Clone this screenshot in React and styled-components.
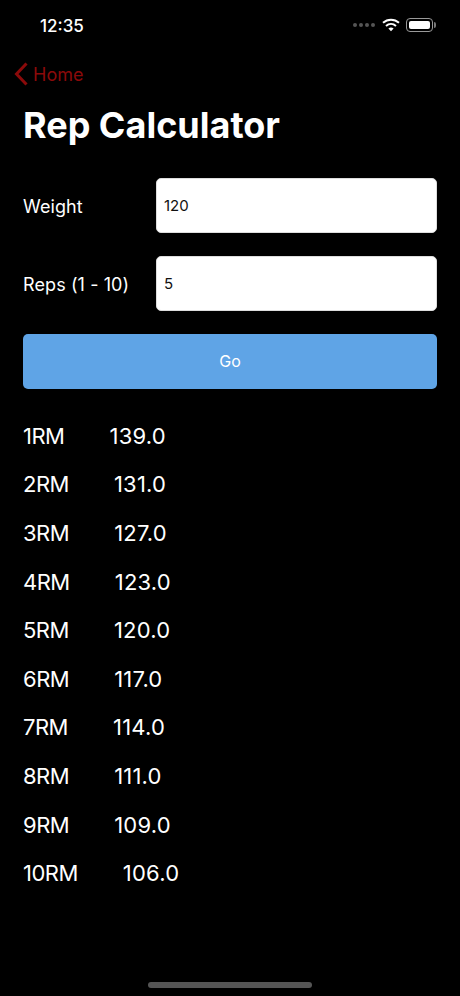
import React from "react";
import styled, { createGlobalStyle } from "styled-components";

const results = [
  { label: "1RM", value: "139.0" },
  { label: "2RM", value: "131.0" },
  { label: "3RM", value: "127.0" },
  { label: "4RM", value: "123.0" },
  { label: "5RM", value: "120.0" },
  { label: "6RM", value: "117.0" },
  { label: "7RM", value: "114.0" },
  { label: "8RM", value: "111.0" },
  { label: "9RM", value: "109.0" },
  { label: "10RM", value: "106.0" },
];

const App = () => {
  return (
    <Screen>
      <GlobalStyle />
      <StatusBar>
        <Time>12:35</Time>
        <StatusIcons>
          <Dots>
            <Dot />
            <Dot />
            <Dot />
            <Dot />
          </Dots>
          <svg width="18" height="14" viewBox="0 0 18 14" fill="none">
            <path d="M1 4.8C5.6 0.6 12.4 0.6 17 4.8" stroke="#fff" strokeWidth="2" />
            <path d="M4 8C6.9 5.4 11.1 5.4 14 8" stroke="#fff" strokeWidth="2" />
            <path d="M9 13.2L6.4 10.5C8 9.2 10 9.2 11.6 10.5Z" fill="#fff" />
          </svg>
          <Battery>
            <BatteryFill />
          </Battery>
        </StatusIcons>
      </StatusBar>
      <BackRow>
        <svg width="15" height="24" viewBox="0 0 15 24" fill="none">
          <path d="M13.5 1.5L3.5 12L13.5 22.5" stroke="#8b0a0a" strokeWidth="3" />
        </svg>
        <BackLabel>Home</BackLabel>
      </BackRow>
      <Title>Rep Calculator</Title>
      <Form>
        <Field>
          <Label>Weight</Label>
          <Input value="120" readOnly />
        </Field>
        <Field>
          <Label>Reps (1 - 10)</Label>
          <Input value="5" readOnly />
        </Field>
        <GoButton>Go</GoButton>
      </Form>
      <Results>
        {results.map((r) => (
          <Row key={r.label}>
            <RowLabel>{r.label}</RowLabel>
            <Value>{r.value}</Value>
          </Row>
        ))}
      </Results>
      <HomeBar />
    </Screen>
  );
};

export default App;

const GlobalStyle = createGlobalStyle`
  body {
    margin: 0;
    background: #000;
    font-family: Inter, "Liberation Sans", sans-serif;
  }
`;

const Screen = styled.div`
  position: relative;
  width: 460px;
  height: 996px;
  background: #000;
  color: #fff;
  overflow: hidden;
`;

const StatusBar = styled.div`
  display: flex;
  justify-content: space-between;
  align-items: center;
  height: 52px;
  padding: 0 24px 0 40px;
`;

const Time = styled.div`
  font-size: 17px;
  font-weight: 500;
`;

const StatusIcons = styled.div`
  display: flex;
  align-items: center;
  gap: 6px;
  margin-top: -2px;
`;

const Dots = styled.div`
  display: flex;
  gap: 2px;
  margin-right: 1px;
`;

const Dot = styled.div`
  width: 4px;
  height: 4px;
  border-radius: 50%;
  background: #555;
`;

const Battery = styled.div`
  position: relative;
  width: 27px;
  height: 14px;
  margin-right: 3px;
  padding: 2px;
  box-sizing: border-box;
  border: 1px solid #999;
  border-radius: 4px;

  &::after {
    content: "";
    position: absolute;
    right: -4px;
    top: 3px;
    width: 2px;
    height: 6px;
    border-radius: 0 2px 2px 0;
    background: #777;
  }
`;

const BatteryFill = styled.div`
  height: 100%;
  background: #fff;
  border-radius: 2px;
`;

const BackRow = styled.div`
  display: flex;
  align-items: center;
  gap: 5px;
  height: 44px;
  padding-left: 13px;
`;

const BackLabel = styled.span`
  font-size: 18px;
  color: #8b0a0a;
`;

const Title = styled.h1`
  margin: 8px 0 0;
  padding-left: 23px;
  font-size: 36px;
  line-height: 42px;
  font-weight: 700;
`;

const Form = styled.div`
  display: flex;
  flex-direction: column;
  gap: 23px;
  margin-top: 32px;
  padding: 0 23px;
`;

const Field = styled.div`
  display: flex;
  align-items: center;
`;

const Label = styled.label`
  width: 133px;
  padding-top: 1px;
  font-size: 18px;
  letter-spacing: 0.1px;
`;

const Input = styled.input`
  flex: 1;
  min-width: 0;
  height: 55px;
  box-sizing: border-box;
  padding: 0 7px;
  border: 1px solid #ddd;
  border-radius: 5px;
  background: #fff;
  color: #111;
  font-family: inherit;
  font-size: 15px;
  outline: none;
`;

const GoButton = styled.button`
  height: 55px;
  padding-bottom: 3px;
  border: 0;
  border-radius: 5px;
  background: #5fa4e6;
  color: #fff;
  font-family: inherit;
  font-size: 16px;
`;

const Results = styled.div`
  display: flex;
  flex-direction: column;
  margin-top: 22.6px;
  padding-left: 23px;
`;

const Row = styled.div`
  display: flex;
  height: 48.6px;
  align-items: center;
  font-size: 22px;
`;

const RowLabel = styled.span`
  letter-spacing: -0.5px;
`;

const Value = styled.span`
  margin-left: 45px;
  letter-spacing: 0.2px;
`;

const HomeBar = styled.div`
  position: absolute;
  left: 148px;
  bottom: 8px;
  width: 164px;
  height: 6px;
  border-radius: 3px;
  background: #555;
`;
